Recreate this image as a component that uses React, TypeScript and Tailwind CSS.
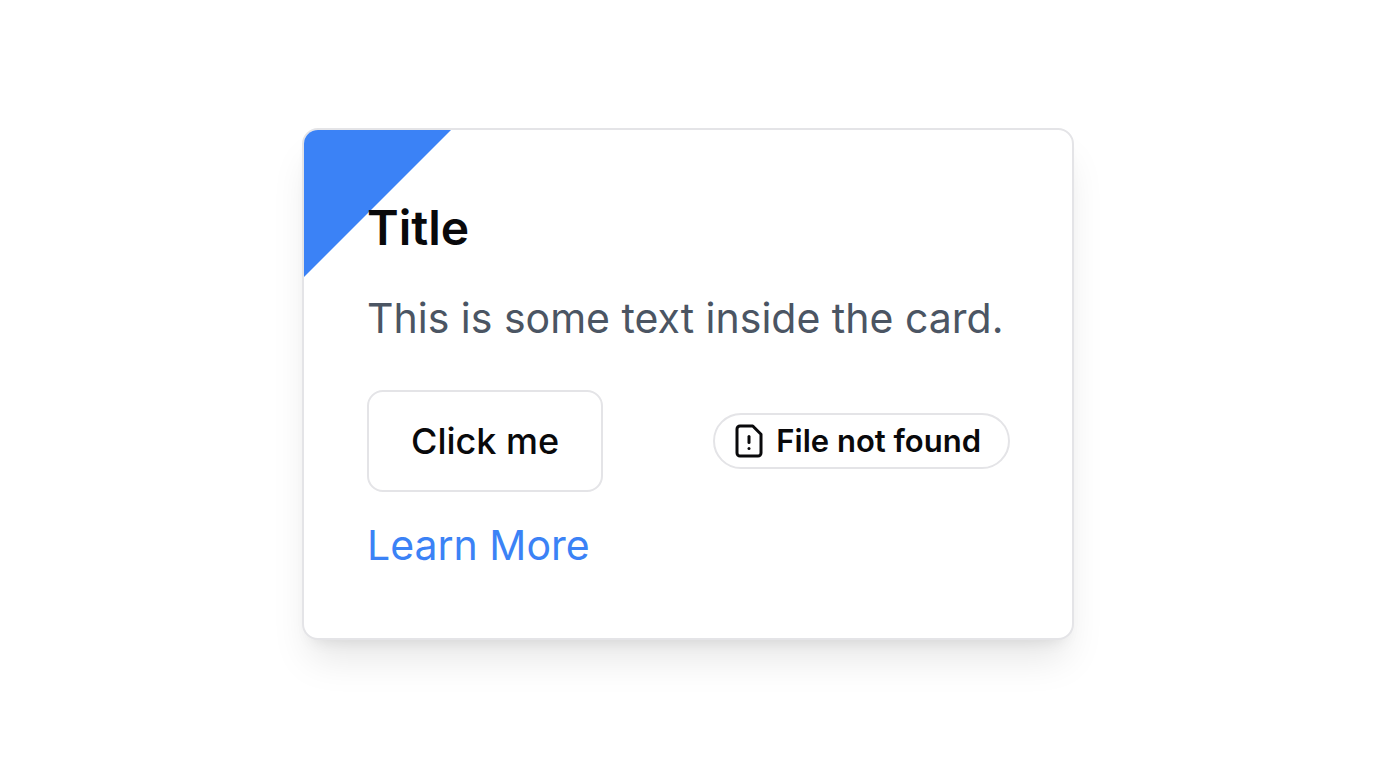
function FileWarningIcon() {
  return (
    <svg
      className="size-9 shrink-0"
      viewBox="0 0 24 24"
      fill="none"
      stroke="currentColor"
      strokeWidth="2"
      strokeLinecap="round"
      strokeLinejoin="round"
      aria-hidden="true"
    >
      <path d="M14.5 2H6a2 2 0 0 0-2 2v16a2 2 0 0 0 2 2h12a2 2 0 0 0 2-2V7.5L14.5 2z" />
      <path d="M12 9v4" />
      <path d="M12 17h.01" />
    </svg>
  );
}

export default function App() {
  return (
    <main className="flex min-h-screen items-center justify-center bg-white font-['Inter',sans-serif] text-[#09090b]">
      <article className="relative w-full max-w-[772px] overflow-hidden rounded-2xl border-2 border-[#e4e4e7] bg-white pr-[62px] pl-[63px] pt-16 pb-[61px] shadow-[0_26px_39px_-8px_rgba(0,0,0,0.1),0_10px_16px_-10px_rgba(0,0,0,0.1)]">
        <div className="absolute top-0 left-0 size-[147px] bg-[#3b82f6] [clip-path:polygon(0_0,100%_0,0_100%)]" />
        <h2 className="relative mb-6 text-5xl leading-[68px] font-semibold">Title</h2>
        <p className="mb-10 text-[41px] leading-[64px] text-[#4b5563]">
          This is some text inside the card.
        </p>
        <div className="mb-[21px] flex flex-wrap items-center justify-between">
          <button
            type="button"
            className="rounded-2xl border-2 border-[#e4e4e7] px-[42px] py-6 text-4xl leading-[50px] font-medium"
          >
            Click me
          </button>
          <div className="flex items-center gap-[9px] rounded-full border-2 border-[#e4e4e7] py-1 pr-[27px] pl-4 text-[31px] leading-[44px] font-semibold">
            <FileWarningIcon />
            File not found
          </div>
        </div>
        <a href="#" className="block text-[41px] leading-[64px] text-[#3b82f6]">
          Learn More
        </a>
      </article>
    </main>
  );
}
